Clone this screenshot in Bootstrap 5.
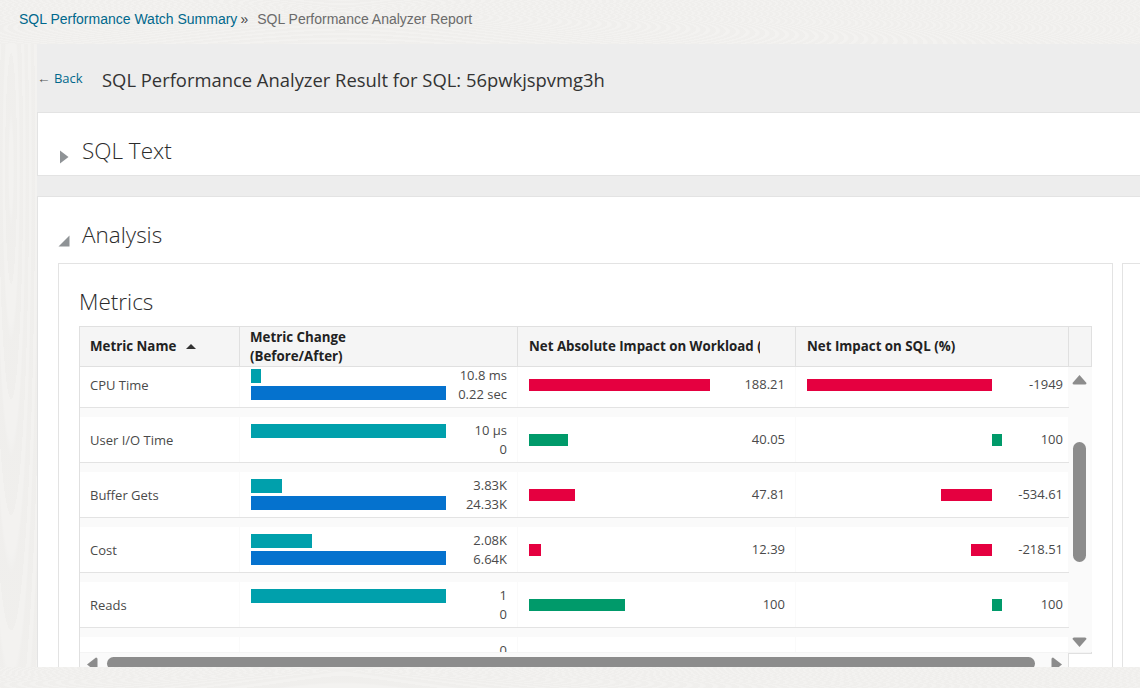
<!DOCTYPE html>
<html lang="en">
<head>
    <meta charset="UTF-8">
    <title>SQL Performance Analyzer Report</title>
    <link href="https://cdn.jsdelivr.net/npm/bootstrap@5.3.3/dist/css/bootstrap.min.css" rel="stylesheet"/>
    <style>
        body { background: #ededed; font-family: "Open Sans", "Noto Sans", sans-serif; color: #2b2b2b; overflow: hidden; }
        .page-shell { height: 688px; overflow: hidden; }
        .textured {
            background-color: #f1f0ee;
            background-image: repeating-radial-gradient(ellipse at 30% 20%, rgba(255,255,255,.14) 0 2px, rgba(225,223,219,.08) 3px 6px);
        }
        .crumbs { height: 44px; padding: 0 19px 5px; font-family: "Liberation Sans", Arial, sans-serif; font-size: 14px; flex-shrink: 0; }
        .crumbs a { color: #00688c; text-decoration: none; }
        .crumbs .sep { color: #444; margin: 0 9px 0 3px; }
        .crumbs .here { color: #6b6b6b; }
        .page-middle { min-height: 0; }
        .side-strip { width: 37px; flex-shrink: 0; }
        .page-content { width: 1103px; flex-shrink: 0; overflow: hidden; }
        .title-row { height: 68px; padding-top: 4px; }
        .back-link { font-size: 13px; color: #00688c; text-decoration: none; width: 65px; flex-shrink: 0; padding-bottom: 2px; white-space: nowrap; }
        .back-link .arrow { color: #555; font-family: "Liberation Sans", sans-serif; font-size: 13.5px; }
        .report-title { font-size: 18.4px; font-weight: 400; margin: 0; color: #333; }
        .panel-box { width: 1200px; background: #fff; border: 1px solid #e3e3e3; border-radius: 0; }
        .panel-sql { height: 64px; margin-bottom: 20px; padding: 22px 0 0 21px; }
        .panel-analysis { padding: 22px 0 0 20px; height: 600px; }
        .panel-head { font-size: 22.5px; font-weight: 300; line-height: 32px; color: #2b2b2b; margin: 0; }
        .tri-holder { width: 23px; flex-shrink: 0; padding-top: 15px; }
        .tri-open { width: 24px; padding-top: 16px; }
        .inner-row { margin-top: 12px; gap: 9px; }
        .metric-card { width: 1055px; flex-shrink: 0; height: 500px; border: 1px solid #e3e3e3; padding: 20px 20px 0; }
        .other-card { width: 200px; flex-shrink: 0; height: 500px; border: 1px solid #e3e3e3; }
        .metric-title { font-size: 22.5px; font-weight: 300; line-height: 36px; margin: 0 0 6px; color: #2b2b2b; }
        .metric-grid { border: 1px solid #e0e0e0; width: 1013px; }
        .grid-head { height: 40px; background: #f5f5f5; border-bottom: 1px solid #e0e0e0; font-size: 13.3px; font-weight: 700; line-height: 19px; color: #222; }
        .c-name { width: 160px; flex-shrink: 0; }
        .c-change { width: 278px; flex-shrink: 0; }
        .c-abs { width: 278px; flex-shrink: 0; }
        .c-sql { width: 273px; flex-shrink: 0; }
        .head-cell { padding: 0 10px; border-right: 1px solid #e0e0e0; white-space: nowrap; overflow: hidden; }
        .head-cell.c-abs, .head-cell.c-sql { padding-left: 11px; }
        .head-clip { display: block; width: 231px; overflow: hidden; }
        .sort-mark { width: 0; height: 0; border: 5px solid transparent; border-top: 0; border-bottom: 5px solid #333; margin-left: 10px; }
        .grid-body { height: 285px; }
        .grid-view { width: 989px; flex-shrink: 0; overflow: hidden; position: relative; }
        .grid-rows { margin-top: -14px; }
        .data-row { height: 55px; padding-top: 9px; background: #fafafa; border-bottom: 1px solid #e3e3e3; font-size: 13px; color: #4a4a4a; }
        .data-row > div { background: #fff; height: 45px; border-right: 1px solid #fafafa; }
        .name-cell { padding: 0 10px; line-height: 47px; }
        .change-cell { padding: 7px 10px 0 11px; }
        .change-bars { width: 195px; flex-shrink: 0; }
        .bar-before, .bar-after { height: 14px; }
        .bar-before { background: #00a0ac; margin-bottom: 3px; }
        .bar-after { background: #0572ce; }
        .value-stack { line-height: 18.5px; text-align: right; margin-top: -3px; }
        .abs-cell { padding: 0 10px 0 11px; }
        .sql-cell { padding: 0 5px 0 11px; }
        .imp-bar { height: 12px; }
        .bar-bad { background: #e50040; }
        .bar-good { background: #009a6a; }
        .neg-side { width: 185px; flex-shrink: 0; }
        .pos-side { width: 10px; flex-shrink: 0; }
        .v-track { width: 23px; flex-shrink: 0; background: #fafafa; position: relative; }
        .v-thumb { position: absolute; left: 4px; top: 75px; width: 13px; height: 120px; background: #8c8c8c; border-radius: 7px; }
        .arrow-up, .arrow-down, .arrow-left, .arrow-right { position: absolute; }
        .arrow-up { left: 3px; top: 7px; width: 15px; height: 11px; }
        .arrow-down { left: 3px; top: 270px; width: 15px; height: 11px; }
        .h-track { height: 40px; background: #fafafa; position: relative; border-top: 1px solid #f4f4f4; }
        .h-thumb { position: absolute; left: 27px; top: 4px; width: 928px; height: 13px; background: #8c8c8c; border-radius: 7px; }
        .arrow-left { left: 6px; top: 4px; width: 12px; height: 15px; }
        .arrow-right { left: 971px; top: 4px; width: 12px; height: 15px; }
        .h-corner { position: absolute; left: 988px; top: 0; width: 24px; height: 40px; border-left: 1px solid #e0e0e0; border-top: 1px solid #e0e0e0; background: #fff; }
        .page-foot { height: 21px; flex-shrink: 0; }
    </style>
</head>
<body>
<div class="page-shell d-flex flex-column">
    <nav class="crumbs textured d-flex align-items-center">
        <a href="#">SQL Performance Watch Summary</a><span class="sep">»</span><span class="here">SQL Performance Analyzer Report</span>
    </nav>

    <div class="page-middle d-flex flex-grow-1">
        <div class="side-strip textured"></div>
        <div class="page-content">
            <div class="title-row d-flex align-items-center">
                <a class="back-link" href="#"><span class="arrow">←</span> Back</a>
                <h1 class="report-title">SQL Performance Analyzer Result for SQL: 56pwkjspvmg3h</h1>
            </div>

            <section class="panel-box panel-sql d-flex">
                <div class="tri-holder">
                    <svg class="d-block" width="10" height="14" viewBox="0 0 10 14"><path d="M1 0.500 L9.500 7 L1 13.500 Z" fill="#8f9396"/></svg>
                </div>
                <h2 class="panel-head">SQL Text</h2>
            </section>

            <section class="panel-box panel-analysis">
                <div class="d-flex">
                    <div class="tri-holder tri-open">
                        <svg class="d-block" width="12" height="12" viewBox="0 0 12 12"><path d="M11.500 0.500 L11.500 11.500 L0.500 11.500 Z" fill="#8f9396"/></svg>
                    </div>
                    <h2 class="panel-head">Analysis</h2>
                </div>
                <div class="inner-row d-flex">
                    <div class="metric-card">
                        <h3 class="metric-title">Metrics</h3>
                        <div class="metric-grid">
                            <div class="grid-head d-flex">
                                <div class="head-cell c-name d-flex align-items-center">Metric Name <span class="sort-mark"></span></div>
                                <div class="head-cell c-change d-flex align-items-center">Metric Change<br>(Before/After)</div>
                                <div class="head-cell c-abs d-flex align-items-center"><span class="head-clip">Net Absolute Impact on Workload (</span></div>
                                <div class="head-cell c-sql d-flex align-items-center">Net Impact on SQL (%)</div>
                            </div>
                            <div class="grid-body d-flex">
                                <div class="grid-view">
                                    <div class="grid-rows" id="rows"></div>
                                </div>
                                <div class="v-track">
                                    <svg class="arrow-up" viewBox="0 0 15 11"><path d="M7.5 1 L14.5 9 Q14.5 10.500 13 10.500 L2 10.500 Q0.500 10.500 0.500 9 Z" fill="#8c8c8c"/></svg>
                                    <div class="v-thumb"></div>
                                    <svg class="arrow-down" viewBox="0 0 15 11"><path d="M7.5 10 L14.5 2 Q14.5 0.500 13 0.500 L2 0.500 Q0.500 0.500 0.500 2 Z" fill="#8c8c8c"/></svg>
                                </div>
                            </div>
                            <div class="h-track">
                                <svg class="arrow-left" viewBox="0 0 12 15"><path d="M1 7.500 L10 0.500 Q11.500 0.500 11.500 2 L11.500 13 Q11.500 14.500 10 14.500 Z" fill="#8c8c8c"/></svg>
                                <div class="h-thumb"></div>
                                <svg class="arrow-right" viewBox="0 0 12 15"><path d="M11 7.500 L2 0.500 Q0.500 0.500 0.500 2 L0.500 13 Q0.500 14.500 2 14.500 Z" fill="#8c8c8c"/></svg>
                                <div class="h-corner"></div>
                            </div>
                        </div>
                    </div>
                    <div class="other-card"></div>
                </div>
            </section>
        </div>
    </div>

    <div class="page-foot textured"></div>
</div>

<script>
    // before/after in px of 195, abs impact in px, sql impact in px (negative goes left)
    const metrics = [
        { name: "CPU Time", before: 10, after: 195, v1: "10.8 ms", v2: "0.22 sec", absPx: 181, absBad: true, abs: "188.21", sqlPx: -185, sql: "-1949" },
        { name: "User I/O Time", before: 195, after: 0, v1: "10 µs", v2: "0", absPx: 39, absBad: false, abs: "40.05", sqlPx: 10, sql: "100" },
        { name: "Buffer Gets", before: 31, after: 195, v1: "3.83K", v2: "24.33K", absPx: 46, absBad: true, abs: "47.81", sqlPx: -51, sql: "-534.61" },
        { name: "Cost", before: 61, after: 195, v1: "2.08K", v2: "6.64K", absPx: 12, absBad: true, abs: "12.39", sqlPx: -21, sql: "-218.51" },
        { name: "Reads", before: 195, after: 0, v1: "1", v2: "0", absPx: 96, absBad: false, abs: "100", sqlPx: 10, sql: "100" },
        { name: "", before: 0, after: 0, v1: "0", v2: "", absPx: 0, absBad: false, abs: "", sqlPx: 0, sql: "" }
    ];
    document.getElementById("rows").innerHTML = metrics.map(m => `
        <div class="data-row d-flex">
            <div class="c-name name-cell">${m.name}</div>
            <div class="c-change change-cell d-flex justify-content-between">
                <div class="change-bars">
                    ${m.before ? `<div class="bar-before" style="width:${m.before}px"></div>` : ""}
                    ${m.after ? `<div class="bar-after" style="width:${m.after}px"></div>` : ""}
                </div>
                <div class="value-stack">${m.v1}<br>${m.v2}</div>
            </div>
            <div class="c-abs abs-cell d-flex justify-content-between align-items-center">
                <div class="imp-bar ${m.absBad ? "bar-bad" : "bar-good"}" style="width:${m.absPx}px"></div>
                <span>${m.abs}</span>
            </div>
            <div class="c-sql sql-cell d-flex justify-content-between align-items-center">
                <div class="d-flex">
                    <div class="neg-side d-flex justify-content-end">${m.sqlPx < 0 ? `<div class="imp-bar bar-bad" style="width:${-m.sqlPx}px"></div>` : ""}</div>
                    <div class="pos-side">${m.sqlPx > 0 ? `<div class="imp-bar bar-good" style="width:${m.sqlPx}px"></div>` : ""}</div>
                </div>
                <span>${m.sql}</span>
            </div>
        </div>`).join("");
</script>
<script src="https://cdn.jsdelivr.net/npm/bootstrap@5.3.3/dist/js/bootstrap.bundle.min.js"></script>
</body>
</html>
